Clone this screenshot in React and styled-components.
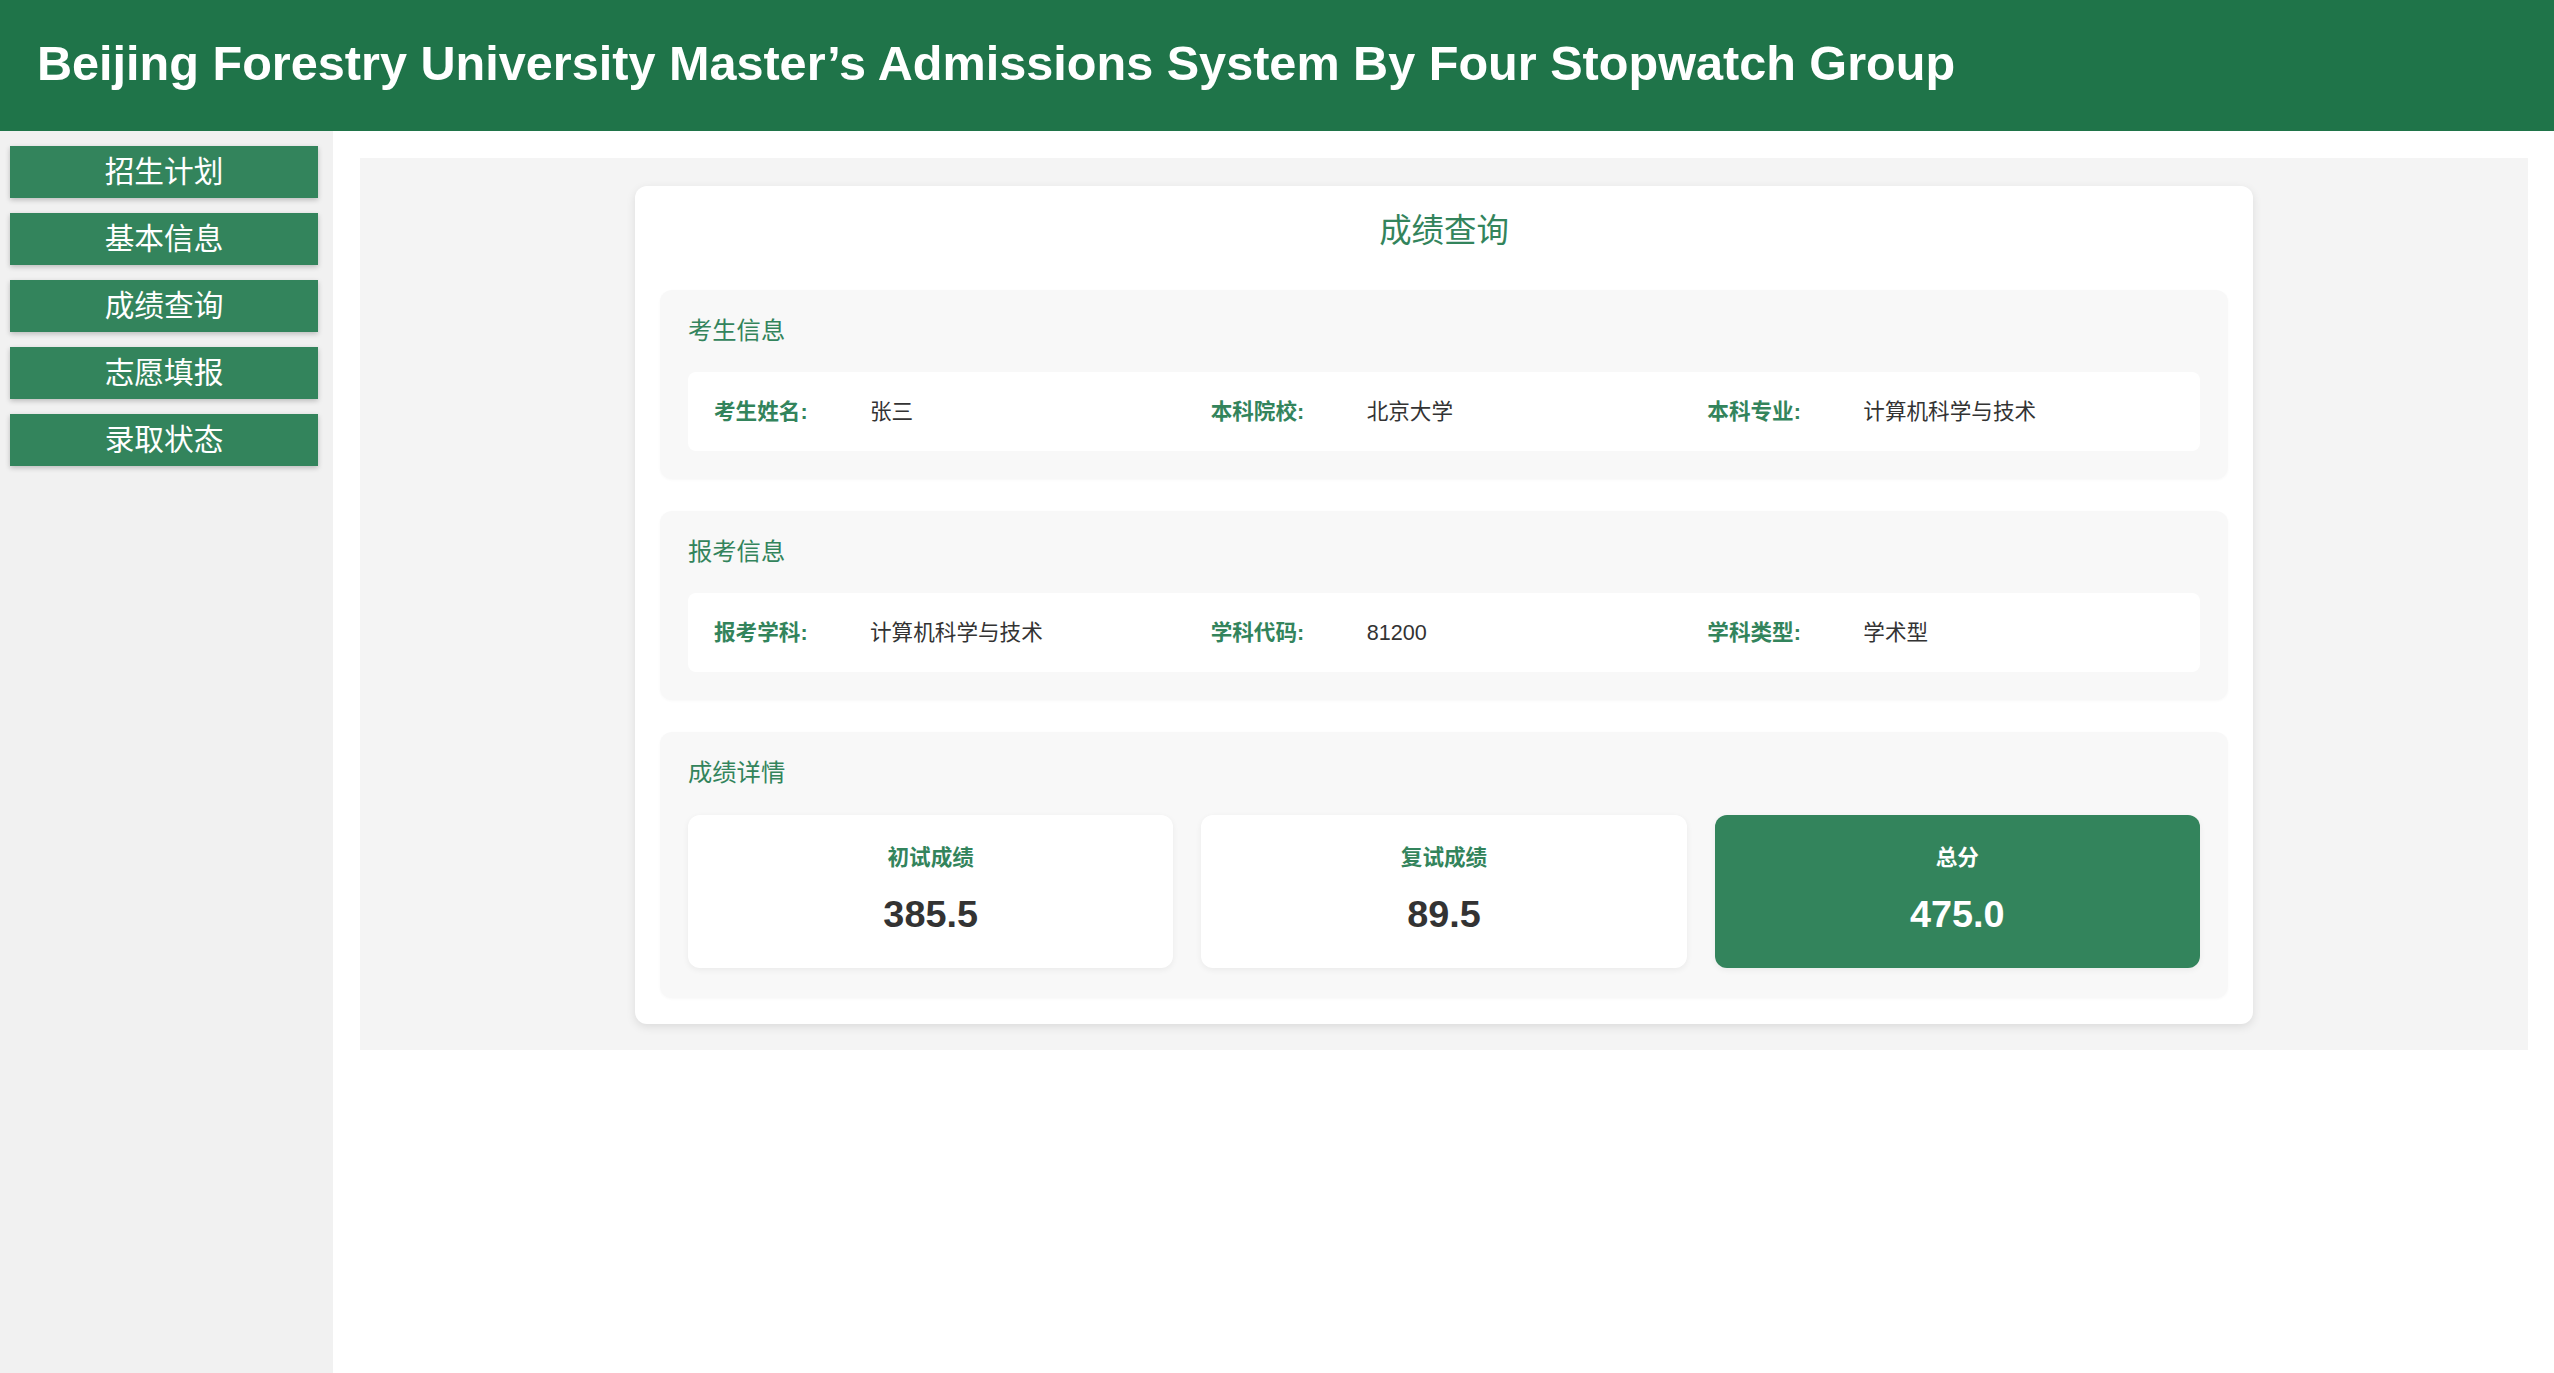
import React from "react";
import styled, { createGlobalStyle } from "styled-components";

const HEADER_GREEN = "#1f7449";
const ACCENT = "#33845c";
const TEXT_DARK = "#333333";

const GlobalStyle = createGlobalStyle`
  html, body {
    margin: 0;
    padding: 0;
    background: #ffffff;
    font-family: "Liberation Sans", "Noto Sans CJK SC", sans-serif;
  }
  * { box-sizing: border-box; }
`;

const Page = styled.div`
  display: flex;
  flex-direction: column;
  min-height: 100vh;
`;

const Header = styled.header`
  height: 131px;
  background: ${HEADER_GREEN};
  display: flex;
  align-items: center;
  padding: 0 37px 4px;
  h1 {
    margin: 0;
    color: #ffffff;
    font-family: "Liberation Sans", Arial, sans-serif;
    font-weight: 700;
    font-size: 48.6px;
    line-height: 1;
    white-space: nowrap;
  }
`;

const Body = styled.div`
  flex: 1;
  display: flex;
`;

const Sidebar = styled.nav`
  width: 333px;
  flex-shrink: 0;
  background: #f1f1f1;
  padding: 15px 15px 0 10px;
  display: flex;
  flex-direction: column;
  gap: 15px;
`;

const NavButton = styled.button`
  width: 308px;
  height: 52px;
  border: none;
  border-radius: 0;
  background: ${ACCENT};
  color: #ffffff;
  font-family: "Liberation Sans", "Noto Sans CJK SC", sans-serif;
  font-size: 29.7px;
  line-height: 52px;
  padding: 0;
  text-align: center;
  box-shadow: 0 2px 5px rgba(0, 0, 0, 0.22);
  cursor: pointer;
`;

const Main = styled.main`
  flex: 1;
  padding: 27px 26px 27px 27px;
  align-self: flex-start;
`;

const Panel = styled.div`
  background: #f4f4f4;
  padding: 28px 0 26px;
  display: flex;
  justify-content: center;
`;

const Card = styled.div`
  width: 1618px;
  background: #ffffff;
  border-radius: 12px;
  box-shadow: 0 3px 10px rgba(0, 0, 0, 0.1);
  padding: 25px 25px 26px;
  display: flex;
  flex-direction: column;
`;

const Title = styled.h2`
  margin: 0 0 39px;
  text-align: center;
  color: ${ACCENT};
  font-size: 32.4px;
  font-weight: 400;
  line-height: 40px;
`;

const Section = styled.section`
  background: #f8f8f8;
  border-radius: 12px;
  padding: 28px 28px ${(p) => (p.$tight ? "30px" : "28px")};
  margin-bottom: ${(p) => (p.$last ? "0" : "32px")};
  box-shadow: 0 1px 3px rgba(0, 0, 0, 0.03);
`;

const SectionTitle = styled.h3`
  margin: 0 0 ${(p) => (p.$gap ? p.$gap : "28px")};
  color: ${ACCENT};
  font-size: 24.3px;
  font-weight: 400;
  line-height: 26px;
`;

const InfoRow = styled.div`
  height: 79px;
  background: #ffffff;
  border-radius: 8px;
  padding: 0 26px;
  display: grid;
  grid-template-columns: repeat(3, 1fr);
  column-gap: 30px;
  align-items: center;
`;

const InfoItem = styled.div`
  display: flex;
  align-items: center;
  font-size: 21.6px;
  line-height: 28px;
`;

const Label = styled.span`
  width: 156px;
  flex-shrink: 0;
  color: ${ACCENT};
  font-weight: 700;
`;

const Value = styled.span`
  color: ${TEXT_DARK};
`;

const ScoreGrid = styled.div`
  display: grid;
  grid-template-columns: repeat(3, 1fr);
  gap: 28px;
`;

const ScoreCard = styled.div`
  height: 153px;
  border-radius: 12px;
  background: ${(p) => (p.$total ? ACCENT : "#ffffff")};
  box-shadow: 0 2px 6px rgba(0, 0, 0, 0.06);
  display: flex;
  flex-direction: column;
  align-items: center;
  padding-top: 30px;
`;

const ScoreLabel = styled.div`
  color: ${(p) => (p.$total ? "#ffffff" : ACCENT)};
  font-size: 21.6px;
  font-weight: 700;
  line-height: 26px;
`;

const ScoreValue = styled.div`
  margin-top: 21px;
  color: ${(p) => (p.$total ? "#ffffff" : TEXT_DARK)};
  font-family: "Liberation Sans", Arial, sans-serif;
  font-size: 37.8px;
  font-weight: 700;
  line-height: 44px;
`;

const navItems = ["招生计划", "基本信息", "成绩查询", "志愿填报", "录取状态"];

const candidateInfo = [
  { label: "考生姓名:", value: "张三" },
  { label: "本科院校:", value: "北京大学" },
  { label: "本科专业:", value: "计算机科学与技术" },
];

const applyInfo = [
  { label: "报考学科:", value: "计算机科学与技术" },
  { label: "学科代码:", value: "81200" },
  { label: "学科类型:", value: "学术型" },
];

const scores = [
  { label: "初试成绩", value: "385.5" },
  { label: "复试成绩", value: "89.5" },
  { label: "总分", value: "475.0", total: true },
];

function InfoBlock({ items }) {
  return (
    <InfoRow>
      {items.map((it) => (
        <InfoItem key={it.label}>
          <Label>{it.label}</Label>
          <Value>{it.value}</Value>
        </InfoItem>
      ))}
    </InfoRow>
  );
}

export default function App() {
  return (
    <>
      <GlobalStyle />
      <Page>
        <Header>
          <h1>Beijing Forestry University Master’s Admissions System By Four Stopwatch Group</h1>
        </Header>
        <Body>
          <Sidebar>
            {navItems.map((item) => (
              <NavButton key={item}>{item}</NavButton>
            ))}
          </Sidebar>
          <Main>
            <Panel>
              <Card>
                <Title>成绩查询</Title>
                <Section>
                  <SectionTitle>考生信息</SectionTitle>
                  <InfoBlock items={candidateInfo} />
                </Section>
                <Section>
                  <SectionTitle>报考信息</SectionTitle>
                  <InfoBlock items={applyInfo} />
                </Section>
                <Section $last $tight>
                  <SectionTitle $gap="29px">成绩详情</SectionTitle>
                  <ScoreGrid>
                    {scores.map((s) => (
                      <ScoreCard key={s.label} $total={s.total}>
                        <ScoreLabel $total={s.total}>{s.label}</ScoreLabel>
                        <ScoreValue $total={s.total}>{s.value}</ScoreValue>
                      </ScoreCard>
                    ))}
                  </ScoreGrid>
                </Section>
              </Card>
            </Panel>
          </Main>
        </Body>
      </Page>
    </>
  );
}
